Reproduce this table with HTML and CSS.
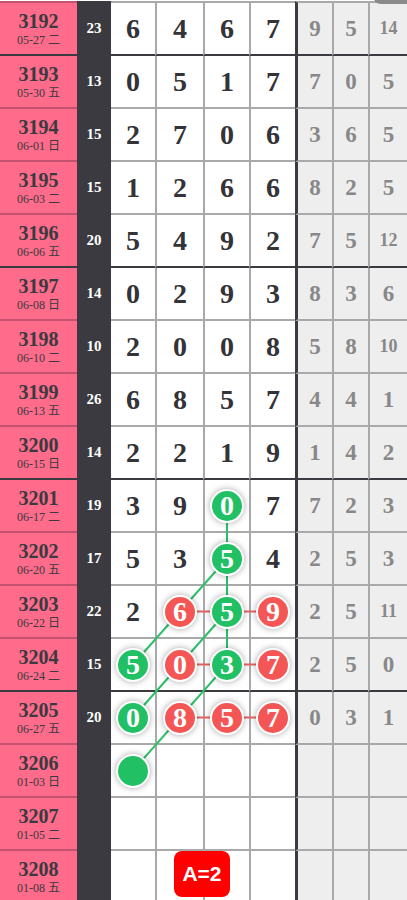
FILE: index.html
```html
<!DOCTYPE html>
<html lang="en">
<head>
    <meta charset="UTF-8">
    <meta name="viewport" content="width=device-width, initial-scale=1.0">
    <title>走势图</title>
    <link rel="stylesheet" href="styles.css">
</head>
<body>
    <div class="topTab"></div>

    <div id="board">
        <!-- lines between the balls, drawn under them -->
        <svg class="links" width="407" height="900" viewBox="0 0 407 900">
            <g stroke="#2cbf69" stroke-width="2" fill="none">
                <line x1="227" y1="504.5" x2="227" y2="663.5" />
                <line x1="227" y1="557.5" x2="133" y2="663.5" />
                <line x1="227" y1="610.5" x2="133" y2="716.5" />
                <line x1="227" y1="663.5" x2="133" y2="769.5" />
            </g>
            <g stroke="#e86464" stroke-width="2" fill="none">
                <line x1="180" y1="610.5" x2="273" y2="610.5" />
                <line x1="180" y1="663.5" x2="273" y2="663.5" />
                <line x1="180" y1="716.5" x2="273" y2="716.5" />
            </g>
        </svg>

        <div class="row top grp">
            <div class="no"><b>3192</b><span>05-27 二</span></div>
            <div class="sum">23</div>
            <div class="d">6</div><div class="d">4</div><div class="d">6</div><div class="d">7</div>
            <div class="g">9</div><div class="g">5</div><div class="g two">14</div>
        </div>
        <div class="row">
            <div class="no"><b>3193</b><span>05-30 五</span></div>
            <div class="sum">13</div>
            <div class="d">0</div><div class="d">5</div><div class="d">1</div><div class="d">7</div>
            <div class="g">7</div><div class="g">0</div><div class="g">5</div>
        </div>
        <div class="row">
            <div class="no"><b>3194</b><span>06-01 日</span></div>
            <div class="sum">15</div>
            <div class="d">2</div><div class="d">7</div><div class="d">0</div><div class="d">6</div>
            <div class="g">3</div><div class="g">6</div><div class="g">5</div>
        </div>
        <div class="row">
            <div class="no"><b>3195</b><span>06-03 二</span></div>
            <div class="sum">15</div>
            <div class="d">1</div><div class="d">2</div><div class="d">6</div><div class="d">6</div>
            <div class="g">8</div><div class="g">2</div><div class="g">5</div>
        </div>
        <div class="row grp">
            <div class="no"><b>3196</b><span>06-06 五</span></div>
            <div class="sum">20</div>
            <div class="d">5</div><div class="d">4</div><div class="d">9</div><div class="d">2</div>
            <div class="g">7</div><div class="g">5</div><div class="g two">12</div>
        </div>
        <div class="row">
            <div class="no"><b>3197</b><span>06-08 日</span></div>
            <div class="sum">14</div>
            <div class="d">0</div><div class="d">2</div><div class="d">9</div><div class="d">3</div>
            <div class="g">8</div><div class="g">3</div><div class="g">6</div>
        </div>
        <div class="row">
            <div class="no"><b>3198</b><span>06-10 二</span></div>
            <div class="sum">10</div>
            <div class="d">2</div><div class="d">0</div><div class="d">0</div><div class="d">8</div>
            <div class="g">5</div><div class="g">8</div><div class="g two">10</div>
        </div>
        <div class="row">
            <div class="no"><b>3199</b><span>06-13 五</span></div>
            <div class="sum">26</div>
            <div class="d">6</div><div class="d">8</div><div class="d">5</div><div class="d">7</div>
            <div class="g">4</div><div class="g">4</div><div class="g">1</div>
        </div>
        <div class="row grp">
            <div class="no"><b>3200</b><span>06-15 日</span></div>
            <div class="sum">14</div>
            <div class="d">2</div><div class="d">2</div><div class="d">1</div><div class="d">9</div>
            <div class="g">1</div><div class="g">4</div><div class="g">2</div>
        </div>
        <div class="row">
            <div class="no"><b>3201</b><span>06-17 二</span></div>
            <div class="sum">19</div>
            <div class="d">3</div><div class="d">9</div><div class="d"><i class="ball green">0</i></div><div class="d">7</div>
            <div class="g">7</div><div class="g">2</div><div class="g">3</div>
        </div>
        <div class="row">
            <div class="no"><b>3202</b><span>06-20 五</span></div>
            <div class="sum">17</div>
            <div class="d">5</div><div class="d">3</div><div class="d"><i class="ball green">5</i></div><div class="d">4</div>
            <div class="g">2</div><div class="g">5</div><div class="g">3</div>
        </div>
        <div class="row">
            <div class="no"><b>3203</b><span>06-22 日</span></div>
            <div class="sum">22</div>
            <div class="d">2</div><div class="d"><i class="ball red">6</i></div><div class="d"><i class="ball green">5</i></div><div class="d"><i class="ball red">9</i></div>
            <div class="g">2</div><div class="g">5</div><div class="g two">11</div>
        </div>
        <div class="row grp">
            <div class="no"><b>3204</b><span>06-24 二</span></div>
            <div class="sum">15</div>
            <div class="d"><i class="ball green">5</i></div><div class="d"><i class="ball red">0</i></div><div class="d"><i class="ball green">3</i></div><div class="d"><i class="ball red">7</i></div>
            <div class="g">2</div><div class="g">5</div><div class="g">0</div>
        </div>
        <div class="row">
            <div class="no"><b>3205</b><span>06-27 五</span></div>
            <div class="sum">20</div>
            <div class="d"><i class="ball green">0</i></div><div class="d"><i class="ball red">8</i></div><div class="d"><i class="ball red">5</i></div><div class="d"><i class="ball red">7</i></div>
            <div class="g">0</div><div class="g">3</div><div class="g">1</div>
        </div>
        <div class="row">
            <div class="no"><b>3206</b><span>01-03 日</span></div>
            <div class="sum"></div>
            <div class="d"><i class="ball green"></i></div><div class="d"></div><div class="d"></div><div class="d"></div>
            <div class="g"></div><div class="g"></div><div class="g"></div>
        </div>
        <div class="row">
            <div class="no"><b>3207</b><span>01-05 二</span></div>
            <div class="sum"></div>
            <div class="d"></div><div class="d"></div><div class="d"></div><div class="d"></div>
            <div class="g"></div><div class="g"></div><div class="g"></div>
        </div>
        <div class="row grp">
            <div class="no"><b>3208</b><span>01-08 五</span></div>
            <div class="sum"></div>
            <div class="d"></div><div class="d"></div><div class="d"></div><div class="d"></div>
            <div class="g"></div><div class="g"></div><div class="g"></div>
        </div>
    </div>

    <div class="badge">A=2</div>
</body>
</html>
```

FILE: styles.css
```css
body {
    margin: 0;
    font-family: "Liberation Serif", "Noto Sans CJK SC", serif;
    color: #3a3a40;
    overflow: hidden;
}

#board {
    position: relative;
    margin-top: 1px;
}

.links {
    position: absolute;
    top: 0;
    left: 0;
    z-index: 1;
}

.row {
    display: grid;
    grid-template-columns: 77px 34px 44px 48px 46px 46px 37px 36px 1fr;
    height: 53px;
}

.row > div {
    box-sizing: border-box;
    border-bottom: 2px solid #a9a9a9;
    display: flex;
    align-items: center;
    justify-content: center;
    font-weight: bold;
}

.row.top {
    height: 55px;
}

.row.top > div {
    border-top: 2px solid #a9a9a9;
}

.no {
    background-color: #fe6b8b;
    flex-direction: column;
    border-bottom-color: #c4516e !important;
}

.row.top .no {
    border-top-color: #c4516e;
}

.no b {
    font-size: 20px;
    line-height: 20px;
}

.no span {
    font-size: 12px;
    font-weight: normal;
    line-height: 14px;
    margin-top: 2px;
}

.sum {
    background-color: #3a3a40;
    border-bottom-color: #3a3a40 !important;
    color: #fff;
    font-size: 15px;
}

.row.top .sum {
    border-top-color: #3a3a40;
}

.d {
    background-color: #fff;
    font-size: 28px;
    color: #333338;
}

.d + .d {
    border-left: 2px solid #a9a9a9;
}

.g {
    background-color: #eeeeee;
    border-left: 2px solid #a9a9a9;
    font-size: 23px;
    color: #888;
}

.d + .g {
    border-left: 3px solid #3a3a40;
}

.g.two {
    font-size: 18px;
}

.row.grp > div {
    border-bottom-color: #3a3a40;
}

.row.grp > .no {
    border-bottom-color: #3a3a40 !important;
}

.ball {
    position: relative;
    z-index: 2;
    box-sizing: border-box;
    width: 34px;
    height: 34px;
    border-radius: 50%;
    border: 2px solid #fff;
    box-shadow: 0 0 6px rgba(0, 0, 0, 0.35);
    display: flex;
    align-items: center;
    justify-content: center;
    font-style: normal;
    font-size: 28px;
    color: #fff;
    line-height: 1;
}

.green {
    background-color: #22c064;
}

.red {
    background-color: #f45555;
}

.badge {
    position: fixed;
    left: 174px;
    bottom: 3px;
    width: 56px;
    height: 46px;
    border-radius: 8px;
    background-color: #ff0000;
    color: #fff;
    font-family: "Liberation Sans", sans-serif;
    font-weight: bold;
    font-size: 21px;
    display: flex;
    align-items: center;
    justify-content: center;
    z-index: 3;
}

.topTab {
    position: fixed;
    top: -36px;
    right: 0;
    width: 34px;
    height: 40px;
    border-radius: 0 0 0 8px;
    background-color: #8a8a8a;
    z-index: 3;
}
```
